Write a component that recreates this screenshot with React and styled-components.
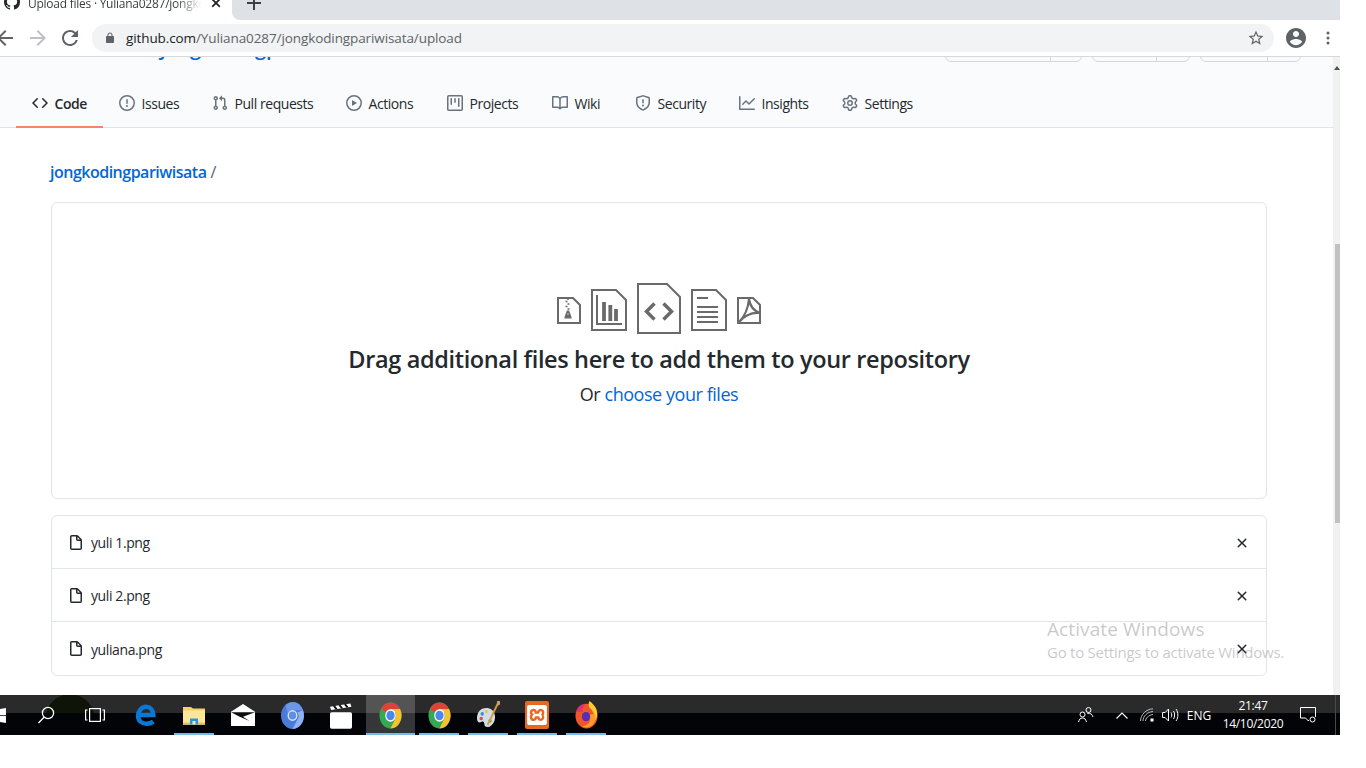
import React from 'react';
import styled, { createGlobalStyle } from 'styled-components';
import { FaWindows } from 'react-icons/fa';
import { SiXampp } from 'react-icons/si';

const Global = createGlobalStyle`
  html, body { margin: 0; padding: 0; background: #fff; }
  * { box-sizing: border-box; }
  body { font-family: "Open Sans", "Noto Sans", "Liberation Sans", sans-serif; color: #24292e; }
`;

const P = {
  code: 'M4.72 3.22a.75.75 0 011.06 1.06L2.06 8l3.72 3.72a.75.75 0 11-1.06 1.06L.47 8.53a.75.75 0 010-1.06l4.25-4.25zm6.56 0a.75.75 0 10-1.06 1.06L13.94 8l-3.72 3.72a.75.75 0 101.06 1.06l4.25-4.25a.75.75 0 000-1.06l-4.25-4.25z',
  issue: 'M8 1.5a6.5 6.5 0 100 13 6.5 6.5 0 000-13zM0 8a8 8 0 1116 0A8 8 0 010 8zm9 3a1 1 0 11-2 0 1 1 0 012 0zm-.25-6.25a.75.75 0 00-1.5 0v3.5a.75.75 0 001.5 0v-3.5z',
  pr: 'M7.177 3.073L9.573.677A.25.25 0 0110 .854v4.792a.25.25 0 01-.427.177L7.177 3.427a.25.25 0 010-.354zM3.75 2.5a.75.75 0 100 1.5.75.75 0 000-1.5zm-2.25.75a2.25 2.25 0 113 2.122v5.256a2.251 2.251 0 11-1.5 0V5.372A2.25 2.25 0 011.5 3.25zM11 2.5h-1V4h1a1 1 0 011 1v5.628a2.251 2.251 0 101.5 0V5A2.5 2.5 0 0011 2.5zm1 10.25a.75.75 0 111.5 0 .75.75 0 01-1.5 0zM3.75 12a.75.75 0 100 1.5.75.75 0 000-1.5z',
  play: 'M1.5 8a6.5 6.5 0 1113 0 6.5 6.5 0 01-13 0zM8 0a8 8 0 100 16A8 8 0 008 0zM6.379 5.227A.25.25 0 006 5.442v5.117a.25.25 0 00.379.214l4.264-2.559a.25.25 0 000-.428L6.379 5.227z',
  project: 'M1.75 0A1.75 1.75 0 000 1.75v12.5C0 15.216.784 16 1.75 16h12.5A1.75 1.75 0 0016 14.25V1.75A1.75 1.75 0 0014.25 0H1.75zM1.5 1.75a.25.25 0 01.25-.25h12.5a.25.25 0 01.25.25v12.5a.25.25 0 01-.25.25H1.75a.25.25 0 01-.25-.25V1.75zM11.75 3a.75.75 0 00-.75.75v7.5a.75.75 0 001.5 0v-7.5a.75.75 0 00-.75-.75zm-8.25.75a.75.75 0 011.5 0v5.5a.75.75 0 01-1.5 0v-5.5zM8 3a.75.75 0 00-.75.75v3.5a.75.75 0 001.5 0v-3.5A.75.75 0 008 3z',
  book: 'M0 1.75A.75.75 0 01.75 1h4.253c1.227 0 2.317.59 3 1.501A3.744 3.744 0 0111.006 1h4.245a.75.75 0 01.75.75v10.5a.75.75 0 01-.75.75h-4.507a2.25 2.25 0 00-1.591.659l-.622.621a.75.75 0 01-1.06 0l-.622-.621A2.25 2.25 0 005.258 13H.75a.75.75 0 01-.75-.75V1.75zm8.755 3a2.25 2.25 0 012.25-2.25H14.5v9h-3.757c-.71 0-1.4.201-1.992.572l.004-7.322zm-1.504 7.324l.004-5.073-.002-2.253A2.25 2.25 0 005.003 2.5H1.5v9h3.757a3.75 3.75 0 011.994.574z',
  shield: 'M7.467.133a1.75 1.75 0 011.066 0l5.25 1.68A1.75 1.75 0 0115 3.48V7c0 1.566-.32 3.182-1.303 4.682-.983 1.498-2.585 2.813-5.032 3.855a1.7 1.7 0 01-1.33 0c-2.447-1.042-4.049-2.357-5.032-3.855C1.32 10.182 1 8.566 1 7V3.48a1.75 1.75 0 011.217-1.667l5.25-1.68zm.61 1.429a.25.25 0 00-.153 0l-5.25 1.68a.25.25 0 00-.174.238V7c0 1.358.275 2.666 1.057 3.86.784 1.194 2.121 2.34 4.366 3.297a.2.2 0 00.154 0c2.245-.956 3.582-2.104 4.366-3.298C13.225 9.666 13.5 8.36 13.5 7V3.48a.25.25 0 00-.174-.237l-5.25-1.68zM9 10.5a1 1 0 11-2 0 1 1 0 012 0zm-.25-5.75a.75.75 0 10-1.5 0v3a.75.75 0 001.5 0v-3z',
  graph: 'M1.5 1.75a.75.75 0 00-1.5 0v12.5c0 .414.336.75.75.75h14.5a.75.75 0 000-1.5H1.5V1.75zm14.28 2.53a.75.75 0 00-1.06-1.06L10 7.94 7.53 5.47a.75.75 0 00-1.06 0L3.22 8.72a.75.75 0 001.06 1.06L7 7.06l2.47 2.47a.75.75 0 001.06 0l5.25-5.25z',
  gear: 'M7.429 1.525a6.593 6.593 0 011.142 0c.036.003.108.036.137.146l.289 1.105c.147.56.55.967.997 1.189.174.086.341.183.501.29.417.278.97.423 1.53.27l1.102-.303c.11-.03.175.016.195.046.219.31.41.641.573.989.014.031.022.11-.059.19l-.815.806c-.411.406-.562.957-.53 1.456a4.588 4.588 0 010 .582c-.032.499.119 1.05.53 1.456l.815.806c.08.08.073.159.059.19a6.494 6.494 0 01-.573.99c-.02.029-.086.074-.195.045l-1.103-.303c-.559-.153-1.112-.008-1.529.27-.16.107-.327.204-.5.29-.449.222-.851.628-.998 1.189l-.289 1.105c-.029.11-.101.143-.137.146a6.613 6.613 0 01-1.142 0c-.036-.003-.108-.037-.137-.146l-.289-1.105c-.147-.56-.55-.967-.997-1.189a4.502 4.502 0 01-.501-.29c-.417-.278-.97-.423-1.53-.27l-1.102.303c-.11.03-.175-.016-.195-.046a6.492 6.492 0 01-.573-.989c-.014-.031-.022-.11.059-.19l.815-.806c.411-.406.562-.957.53-1.456a4.587 4.587 0 010-.582c.032-.499-.119-1.05-.53-1.456l-.815-.806c-.08-.08-.073-.159-.059-.19a6.44 6.44 0 01.573-.99c.02-.029.086-.075.195-.045l1.103.303c.559.153 1.112.008 1.529-.27.16-.107.327-.204.5-.29.449-.222.851-.628.998-1.189l.289-1.105c.029-.11.101-.143.137-.146zM8 0c-.236 0-.47.01-.701.03-.743.065-1.29.615-1.458 1.261l-.29 1.106c-.017.066-.078.158-.211.224a5.994 5.994 0 00-.668.386c-.123.082-.233.09-.3.071L3.27 2.776c-.644-.177-1.392.02-1.82.63a7.977 7.977 0 00-.704 1.217c-.315.675-.111 1.422.363 1.891l.815.806c.05.048.098.147.088.294a6.084 6.084 0 000 .772c.01.147-.038.246-.088.294l-.815.806c-.474.469-.678 1.216-.363 1.891.2.428.436.835.704 1.218.428.609 1.176.806 1.82.63l1.103-.303c.066-.019.176-.011.299.071.213.143.436.272.668.386.133.066.194.158.212.224l.289 1.106c.169.646.715 1.196 1.458 1.26a8.094 8.094 0 001.402 0c.743-.064 1.29-.614 1.458-1.26l.29-1.106c.017-.066.078-.158.211-.224a5.98 5.98 0 00.668-.386c.123-.082.233-.09.3-.071l1.102.302c.644.177 1.392-.02 1.82-.63.268-.382.505-.789.704-1.217.315-.675.111-1.422-.364-1.891l-.814-.806c-.05-.048-.098-.147-.088-.294a6.1 6.1 0 000-.772c-.01-.147.039-.246.088-.294l.814-.806c.475-.469.679-1.216.364-1.891a7.992 7.992 0 00-.704-1.218c-.428-.609-1.176-.806-1.82-.63l-1.103.303c-.066.019-.176.011-.299-.071a5.991 5.991 0 00-.668-.386c-.133-.066-.194-.158-.212-.224L10.16 1.29C9.99.645 9.444.095 8.701.031A8.094 8.094 0 008 0zm1.5 8a1.5 1.5 0 11-3 0 1.5 1.5 0 013 0zM11 8a3 3 0 11-6 0 3 3 0 016 0z',
  file: 'M3.75 1.5a.25.25 0 00-.25.25v11.5c0 .138.112.25.25.25h8.5a.25.25 0 00.25-.25V6H9.75A1.75 1.75 0 018 4.25V1.5H3.75zm5.75.56v2.19c0 .138.112.25.25.25h2.19L9.5 2.06zM2 1.75C2 .784 2.784 0 3.75 0h5.086c.464 0 .909.184 1.237.513l3.414 3.414c.329.328.513.773.513 1.237v8.086A1.75 1.75 0 0112.25 15h-8.5A1.75 1.75 0 012 13.25V1.75z',
  x: 'M3.72 3.72a.75.75 0 011.06 0L8 6.94l3.22-3.22a.75.75 0 111.06 1.06L9.06 8l3.22 3.22a.75.75 0 11-1.06 1.06L8 9.06l-3.22 3.22a.75.75 0 01-1.06-1.06L6.94 8 3.72 4.78a.75.75 0 010-1.06z',
  github: 'M8 0C3.58 0 0 3.58 0 8c0 3.54 2.29 6.53 5.47 7.59.4.07.55-.17.55-.38 0-.19-.01-.82-.01-1.49-2.01.37-2.53-.49-2.69-.94-.09-.23-.48-.94-.82-1.13-.28-.15-.68-.52-.01-.53.63-.01 1.08.58 1.23.82.72 1.21 1.87.87 2.33.66.07-.52.28-.87.51-1.07-1.78-.2-3.64-.89-3.64-3.95 0-.87.31-1.59.82-2.15-.08-.2-.36-1.02.08-2.12 0 0 .67-.21 2.2.82.64-.18 1.32-.27 2-.27.68 0 1.36.09 2 .27 1.53-1.04 2.2-.82 2.2-.82.44 1.1.16 1.92.08 2.12.51.56.82 1.27.82 2.15 0 3.07-1.87 3.75-3.65 3.95.29.25.54.73.54 1.48 0 1.07-.01 1.93-.01 2.2 0 .21.15.46.55.38A8.013 8.013 0 0016 8c0-4.42-3.58-8-8-8z',
};

const M = {
  back: 'M20 11H7.83l5.59-5.59L12 4l-8 8 8 8 1.41-1.41L7.83 13H20v-2z',
  forward: 'M12 4l-1.41 1.41L16.17 11H4v2h12.17l-5.58 5.59L12 20l8-8z',
  reload: 'M17.65 6.35A7.958 7.958 0 0012 4c-4.42 0-7.99 3.58-7.99 8s3.57 8 7.99 8c3.73 0 6.84-2.55 7.73-6h-2.08A5.99 5.99 0 0112 18c-3.31 0-6-2.69-6-6s2.69-6 6-6c1.66 0 3.14.69 4.22 1.78L13 11h7V4l-2.35 2.35z',
  star: 'M22 9.24l-7.19-.62L12 2 9.19 8.63 2 9.24l5.46 4.73L5.82 21 12 17.27 18.18 21l-1.63-7.03L22 9.24zM12 15.4l-3.76 2.27 1-4.28-3.32-2.88 4.38-.38L12 6.1l1.71 4.04 4.38.38-3.32 2.88 1 4.28L12 15.4z',
  account: 'M12 2C6.48 2 2 6.48 2 12s4.48 10 10 10 10-4.48 10-10S17.52 2 12 2zm0 3c1.66 0 3 1.34 3 3s-1.34 3-3 3-3-1.34-3-3 1.34-3 3-3zm0 14.2c-2.5 0-4.71-1.28-6-3.22.03-1.99 4-3.08 6-3.08 1.99 0 5.97 1.09 6 3.08-1.29 1.94-3.5 3.22-6 3.22z',
  lock: 'M18 8h-1V6c0-2.76-2.24-5-5-5S7 3.24 7 6v2H6c-1.1 0-2 .9-2 2v10c0 1.1.9 2 2 2h12c1.1 0 2-.9 2-2V10c0-1.1-.9-2-2-2zM9 6c0-1.66 1.34-3 3-3s3 1.34 3 3v2H9V6z',
  more: 'M12 5.500a1.500 1.500 0 100 3 1.500 1.500 0 000-3zm0 5a1.500 1.500 0 100 3 1.500 1.500 0 000-3zm0 5a1.500 1.500 0 100 3 1.500 1.500 0 000-3z',
};

const Screen = styled.div`
  position: relative; width: 1340px; height: 735px; display: flex; flex-direction: column; overflow: hidden; background: #fff;
`;

/* browser chrome */
const TabStrip = styled.div`display: flex; height: 20px; flex: none; background: #fff;`;
const ActiveTab = styled.div`
  width: 232px; height: 20px; overflow: hidden; display: flex; align-items: flex-start; padding-left: 4px; flex: none;
`;
const Favicon = styled.svg`width: 16px; height: 16px; margin-top: -6px; fill: #24292e; flex: none;`;
const TabTitle = styled.span`
  width: 174px; margin: -4px 0 0 8px; font-size: 12px; line-height: 16px; color: #3c4043; white-space: nowrap; overflow: hidden; letter-spacing: -0.25px;
  mask-image: linear-gradient(90deg, #000 85%, transparent);
`;
const TabClose = styled.svg`width: 14px; height: 14px; margin: -4px 0 0 7px; fill: #202124; stroke: #202124; stroke-width: .6; flex: none;`;
const TabRest = styled.div`
  flex: 1; background: #dee1e6; border-bottom-left-radius: 8px; padding-left: 14px; height: 20px; overflow: hidden;
`;
const NewTab = styled.svg`display: block; width: 16px; height: 16px; margin-top: -5px; fill: none; stroke: #3c4043; stroke-width: 2;`;

const Toolbar = styled.div`
  height: 37px; flex: none; display: flex; align-items: flex-start; padding-top: 4px; background: #fff; border-bottom: 1px solid #d6d8de;
`;
const NavIcon = styled.svg`
  width: 24px; height: 24px; margin-top: 2px; flex: none; fill: ${p => p.$color || '#5f6368'}; margin-left: ${p => p.$ml ?? 0}px;
`;
const Omnibox = styled.div`
  flex: 1; height: 28px; margin: 0 10px; border-radius: 14px; background: #f1f3f4; display: flex; align-items: center; padding: 0 9px 0 12px;
`;
const Lock = styled.svg`width: 12px; height: 12px; fill: #5f6368; flex: none;`;
const Url = styled.div`
  flex: 1; margin-left: 10px; font-size: 13.5px; color: #5f6368; letter-spacing: -0.1px; white-space: nowrap;
  b { font-weight: 400; color: #202124; }
`;
const StarIcon = styled.svg`width: 18px; height: 18px; fill: #5f6368; flex: none;`;

/* page */
const Viewport = styled.div`flex: 1; display: flex; min-height: 0; overflow: hidden;`;
const Page = styled.div`flex: 1; min-width: 0; display: flex; flex-direction: column;`;
const RepoHead = styled.div`background: #fafbfc; border-bottom: 1px solid #e1e4e8; height: 71px; flex: none; display: flex; flex-direction: column;`;
const TitleRow = styled.div`
  height: 5px; flex: none; overflow: hidden; display: flex; align-items: flex-end; padding: 0 32px;
`;
const RepoTitle = styled.div`
  font-size: 20px; line-height: 20px; margin-bottom: 4px; white-space: nowrap; color: #0366d6; letter-spacing: -0.1px;
  span { color: #586069; margin: 0 4px; }
  b { font-weight: 600; }
`;
const Actions = styled.div`margin-left: auto; display: flex; gap: 10px; align-items: flex-end;`;
const BtnPair = styled.div`
  display: flex; height: 28px; width: ${p => p.$w}px; border: 1px solid #d5d6d8; border-radius: 6px; background: #fafbfc; flex: none;
`;
const BtnMain = styled.div`flex: 1; border-right: 1px solid #d5d6d8;`;
const BtnCount = styled.div`width: ${p => p.$w}px; flex: none;`;
const TabNav = styled.nav`display: flex; padding-left: 16px; margin-top: auto; margin-bottom: -1px;`;
const NavTab = styled.div`
  display: flex; align-items: center; gap: 6.5px; height: 48px; padding: 0 16px; font-size: 14px; color: #24292e;
  border-bottom: 2px solid ${p => (p.$active ? '#f9826c' : 'transparent')};
  font-weight: ${p => (p.$active ? 600 : 400)};
  svg { width: 16px; height: 16px; fill: ${p => (p.$active ? '#24292e' : '#6a737d')}; fill-rule: evenodd; flex: none; }
`;
const NavLabel = styled.span`display: block; width: ${p => p.$w}px; white-space: nowrap; letter-spacing: -0.45px;`;

const Main = styled.main`padding: 32px 66px 0 51px; display: flex; flex-direction: column;`;
const Crumb = styled.div`
  font-size: 16px; line-height: 24px; height: 24px; color: #586069; white-space: nowrap; letter-spacing: -0.5px; margin-left: -1px;
  b { font-weight: 600; color: #0366d6; margin-right: 4px; }
`;
const DropBox = styled.section`
  margin-top: 18px; height: 297px; border: 1px solid #e1e4e8; border-radius: 6px; display: flex; flex-direction: column; align-items: center; padding-top: 79px;
`;
const DropIcons = styled.svg`
  display: block; width: 206px; height: 53px; fill: none; stroke: #6a6a6a;
`;
const DropTitle = styled.h2`
  margin: 8px 0 0; font-size: 23.5px; line-height: 32px; font-weight: 600; color: #24292e; white-space: nowrap; letter-spacing: -0.36px;
`;
const DropSub = styled.p`
  margin: 7px 0 0; font-size: 18px; line-height: 24px; color: #24292e; white-space: nowrap; letter-spacing: -0.45px;
  a { color: #0366d6; }
`;
const FileList = styled.section`margin-top: 16px; border: 1px solid #e1e4e8; border-radius: 6px;`;
const FileRow = styled.div`
  height: 53px; display: flex; align-items: center; padding: 1px 16px 0 16px; font-size: 14px; letter-spacing: -0.4px;
  &:not(:last-child) { border-bottom: 1px solid #e1e4e8; }
`;
const FileIcon = styled.svg`width: 16px; height: 16px; fill: #24292e; fill-rule: evenodd; flex: none;`;
const FileName = styled.span`flex: 1; margin-left: 7px; color: #24292e;`;
const RemoveIcon = styled.svg`width: 16px; height: 16px; fill: #24292e; flex: none;`;

const Scrollbar = styled.div`width: 7px; flex: none; background: #f1f1f1; padding: 187px 0 0 2px; position: relative;`;
const ScrollUp = styled.div`
  position: absolute; right: 0; top: 9px; width: 0; height: 0; border: 3px solid transparent; border-top: 0; border-bottom: 4px solid #505050;
`;
const Thumb = styled.div`height: 279px; background: #c1c1c1;`;

/* activate watermark */
const Watermark = styled.div`
  position: absolute; left: 1047px; top: 616px; color: rgba(110, 110, 110, .38); white-space: nowrap; pointer-events: none;
`;
const WmTitle = styled.div`font-size: 19px; line-height: 26px; letter-spacing: 0.1px;`;
const WmSub = styled.div`font-size: 15px; line-height: 20px; letter-spacing: -0.25px;`;

/* taskbar */
const Taskbar = styled.footer`
  height: 40px; flex: none; display: flex; position: relative; color: #fff; overflow: hidden;
  background:
    radial-gradient(circle 25px at 70px 24px, #0f1408 98%, transparent 100%) 0 0 / 100% 18px no-repeat,
    linear-gradient(#2a2a2a 0 18px, #020407 18px 100%);
`;
const Slots = styled.div`display: flex; margin-left: -26.5px;`;
const Slot = styled.div`
  width: 49px; height: 40px; display: flex; align-items: center; justify-content: center; position: relative; flex: none;
  padding-right: ${p => p.$pr || 0}px;
  background: ${p => (p.$active ? 'rgba(255,255,255,.2)' : 'transparent')};
  &::after {
    content: ''; display: ${p => (p.$running ? 'block' : 'none')}; position: absolute; bottom: 0; left: 4.5px; right: 4.5px; height: 2px; background: #76b9ed;
  }
`;
const ActiveSlot = styled(Slot)`&::after { left: 0; right: 0; }`;
const Tray = styled.div`margin-left: auto; display: flex; align-items: center; height: 40px;`;
const TraySlot = styled.div`
  width: ${p => p.$w}px; display: flex; align-items: center; justify-content: center; flex: none; font-size: 12px; color: #fff;
  svg { display: block; }
`;
const Clock = styled.div`
  width: 82px; text-align: center; font-size: 12px; line-height: 18.5px; letter-spacing: -0.3px; flex: none;
`;
const TrayEnd = styled.div`width: 18px; height: 40px; flex: none; padding-left: 13px;`;
const TrayLine = styled.div`width: 1px; height: 40px; background: #4a4a4a;`;

const Oct = ({ d }) => <svg viewBox="0 0 16 16"><path d={d} /></svg>;

const ChromeLogo = () => (
  <svg width="23" height="27" viewBox="0 0 24 24" preserveAspectRatio="none">
    <circle cx="12" cy="12" r="11.500" fill="#34a853" />
    <path d="M12 .5a11.500 11.500 0 0 1 9.960 5.750H12a5.750 5.750 0 0 0-4.980 2.870L2.040 6.250A11.500 11.500 0 0 1 12 .5z" fill="#db4437" />
    <path d="M21.960 6.250A11.500 11.500 0 0 1 12 23.500l4.980-8.630a5.750 5.750 0 0 0 0-5.750H12V6.250z" fill="#fbc02d" />
    <circle cx="12" cy="12" r="5.500" fill="#fff" />
    <circle cx="12" cy="12" r="4.300" fill="#4f86ec" />
  </svg>
);

const ChromiumLogo = () => (
  <svg width="23" height="27" viewBox="0 0 24 26" preserveAspectRatio="none">
    <ellipse cx="12" cy="13" rx="12" ry="13" fill="#4b7bd8" />
    <path d="M12 0a12 13 0 0 1 11 8H12a5 5 0 0 0-5 3L5 3a12 13 0 0 1 7-3z" fill="#6b97e8" />
    <path d="M23 8a12 13 0 0 1-11 18l5-9a5 5 0 0 0 0-7z" fill="#8fb2f0" />
    <circle cx="12" cy="13" r="5.200" fill="#d6e4fb" />
    <circle cx="12" cy="13" r="3.800" fill="#5f8de2" />
  </svg>
);

const EdgeLogo = () => (
  <svg width="22" height="24" viewBox="0 0 24 24" fill="none" stroke="#0a78d7" strokeWidth="5">
    <path d="M21 19.200c-2 1.500-4.500 2.300-7 2.300-5.500 0-9.500-3.200-9.500-8.500S8.500 3 13 3s8 3.500 8 9H6" />
  </svg>
);

const SearchIcon = () => (
  <svg width="18" height="18" viewBox="0 0 18 18" fill="none" stroke="#fff" strokeWidth="1.3">
    <circle cx="11" cy="7" r="5.600" />
    <path d="M7 11.200 1.500 17" />
  </svg>
);

const TaskView = () => (
  <svg width="20" height="14" viewBox="0 0 20 14" fill="none" stroke="#fff" strokeWidth="1.2">
    <rect x="4.600" y=".6" width="10.800" height="12.800" />
    <path d="M2.600 2H.6v10h2M17.400 2h2v10h-2" />
  </svg>
);

const Explorer = () => (
  <svg width="22" height="21" viewBox="0 0 22 20">
    <path d="M0 1.500h8l2 1.500h12V19H0z" fill="#f4cf6b" />
    <rect x="0" y="5" width="22" height="14" fill="#fde69a" />
    <rect x="0" y="17" width="22" height="2" fill="#e8c15e" />
    <path d="M7 13h8v6H7z" fill="#1d9be0" />
    <rect x="9.500" y="15.500" width="3" height="3.500" fill="#fde69a" />
  </svg>
);

const MailIcon = () => (
  <svg width="24" height="22" viewBox="0 0 22 20">
    <path d="M0 7 11 0l11 7v13H0z" fill="#fff" />
    <path d="M0 7.500H22L11 11.500l6 4-9-4z" fill="#0a0c10" />
  </svg>
);

const Clapper = () => (
  <svg width="22" height="27" viewBox="0 0 20 24">
    <path d="M0 4 18.500 1 19.500 4 1 7z" fill="#fff" />
    <path d="M3.500 3.300 6 6.200M8.500 2.500 11 5.400M13.500 1.700 16 4.600" stroke="#0a0c10" strokeWidth="1.700" />
    <rect x="0" y="9" width="20" height="15" rx="1.500" fill="#fff" />
  </svg>
);

const Palette = () => (
  <svg width="23" height="28" viewBox="0 0 22 24" preserveAspectRatio="none">
    <path d="M9 6C3 6 0 10 0 15c0 3 2 4 4 3 2-1 3 0 3 2s2 3 5 2c4-2 6-6 5-10-1-4-4-6-8-6z" fill="#cfdde6" />
    <circle cx="5" cy="11" r="1.600" fill="#3d8ad6" />
    <circle cx="9" cy="9" r="1.600" fill="#ecc94b" />
    <circle cx="4" cy="15" r="1.600" fill="#d8534a" />
    <circle cx="12.500" cy="17" r="1.600" fill="#5fae57" />
    <path d="M20 0 9.500 20 10.800 21 21.500 1z" fill="#e0963a" />
    <path d="M19 0h3v3l-2 1z" fill="#b9a27c" />
  </svg>
);

const XamppLogo = styled.div`
  width: 24px; height: 28px; border-radius: 2px; background: #e8681f; color: #fff; display: flex; align-items: center; justify-content: center;
`;

const Firefox = () => (
  <svg width="23" height="28" viewBox="0 0 24 26" preserveAspectRatio="none">
    <circle cx="12" cy="14" r="11.500" fill="#f0562a" />
    <path d="M1 10c2-5 6-7.500 10-7.500C8 6 7 8 8 10c-3 0-5 0-7 0z" fill="#d9346c" />
    <path d="M15 0c3 2 7 5 8 10 .5 3 0 6-2 8 0-5-2-9-6-12-1-2-1-4 0-6z" fill="#ffcb2f" />
    <path d="M21 12c2 5-1 10-6 12-3 1-6 .5-8-.5 5 0 9-3 9-7 0-2-1-3-1-4z" fill="#ff9d2a" />
    <circle cx="11.500" cy="14.500" r="4.300" fill="#5a2eb0" />
  </svg>
);

const People = () => (
  <svg width="16" height="16" viewBox="0 0 16 16" fill="none" stroke="#fff" strokeWidth="1">
    <circle cx="4.500" cy="7.500" r="2.500" />
    <path d="M.6 15c.4-2.600 1.800-4 3.900-4s3.500 1.400 3.900 4" />
    <circle cx="10.500" cy="3" r="2.500" />
    <path d="M9.300 6.300c2.800-.4 5.200 1 5.700 3.700" />
  </svg>
);

const Chevron = () => (
  <svg width="12" height="7" viewBox="0 0 12 7" fill="none" stroke="#fff" strokeWidth="1.100"><path d="M.5 6.500 6 1l5.500 5.500" /></svg>
);

const Wifi = () => (
  <svg width="14" height="14" viewBox="0 0 14 14" fill="none" stroke="#c8c8c8" strokeWidth=".9">
    <path d="M.5 13C.5 7 6 1 13 .8M3 13c0-4.500 4-9 10-9.500M5.500 13c0-2.500 3-6 7.500-6.500" />
    <rect x="10.500" y="10.500" width="3" height="3" fill="#fff" stroke="none" />
  </svg>
);

const Volume = () => (
  <svg width="17" height="14" viewBox="0 0 17 14" fill="none" stroke="#fff" strokeWidth="1">
    <path d="M.6 4.500h2.500L6.500 1v12L3.100 9.500H.6z" />
    <path d="M9 4.500c1 1.500 1 3.500 0 5M11.500 3c1.500 2.500 1.500 5.500 0 8M14 1c2.500 3.500 2.500 8.500 0 12" />
  </svg>
);

const Notify = () => (
  <svg width="16" height="16" viewBox="0 0 16 16" fill="none" stroke="#fff" strokeWidth="1">
    <path d="M.5.500h15v9.500M.5.500v10.500h5l3 3v-1" />
    <circle cx="12.500" cy="12.500" r="2.500" />
  </svg>
);

const Illustration = () => (
  <DropIcons viewBox="0 0 206 53">
    <g strokeWidth="2">
      {/* zip */}
      <path d="M2 16h15l7 7v18H2z" />
      <path d="M11 17h2M9.500 19.500h2M11.500 22h2M9.500 24.500h2M11.500 27h2" strokeWidth="1.500" />
      <path d="M11.500 29.500h1l1.500 4H10zM8.500 35.500h7" strokeWidth="1.800" />
      {/* chart */}
      <path d="M36 8h24l10 10v30H36z" />
      <path d="M41 13v29h25" />
      <path d="M48 20v19M54.300 23v16M60 27v12" strokeWidth="3.800" />
      {/* code */}
      <path d="M82 2h29l13 13v36H82z" />
      <path d="M98.500 21.500l-8 8 8 8M107.500 21.500l8 8-8 8" strokeWidth="3.500" />
      {/* text */}
      <path d="M136 8h24l10 10v30h-34z" />
      <path d="M141 16h11M141 25h21M141 30h21M141 35h21M141 40h21" />
      {/* pdf */}
      <path d="M182 16h15l7 7v18h-22z" />
      <path d="M183 40c4-4 9-12 10-23 1 7 5 12 11 14-8-1-15 2-21 9z" strokeWidth="2.200" />
    </g>
  </DropIcons>
);

const tabs = [
  { d: P.code, label: 'Code', w: 32.5, active: true },
  { d: P.issue, label: 'Issues', w: 38.5 },
  { d: P.pr, label: 'Pull requests', w: 79.5 },
  { d: P.play, label: 'Actions', w: 46.5 },
  { d: P.project, label: 'Projects', w: 50.5 },
  { d: P.book, label: 'Wiki', w: 28.5 },
  { d: P.shield, label: 'Security', w: 49.5 },
  { d: P.graph, label: 'Insights', w: 48.5 },
  { d: P.gear, label: 'Settings', w: 50.5 },
];

const files = ['yuli 1.png', 'yuli 2.png', 'yuliana.png'];

export default function App() {
  return (
    <>
      <Global />
      <Screen>
        <TabStrip>
          <ActiveTab>
            <Favicon viewBox="0 0 16 16"><path d={P.github} /></Favicon>
            <TabTitle>Upload files · Yuliana0287/jongkoding</TabTitle>
            <TabClose viewBox="0 0 16 16"><path d={P.x} /></TabClose>
          </ActiveTab>
          <TabRest>
            <NewTab viewBox="0 0 16 16"><path d="M8 1v14M1 8h14" /></NewTab>
          </TabRest>
        </TabStrip>
        <Toolbar>
          <NavIcon viewBox="0 0 24 24" $ml={-7}><path d={M.back} /></NavIcon>
          <NavIcon viewBox="0 0 24 24" $ml={9} $color="#bdc1c6"><path d={M.forward} /></NavIcon>
          <NavIcon viewBox="0 0 24 24" $ml={8}><path d={M.reload} /></NavIcon>
          <Omnibox>
            <Lock viewBox="0 0 24 24"><path d={M.lock} /></Lock>
            <Url><b>github.com</b>/Yuliana0287/jongkodingpariwisata/upload</Url>
            <StarIcon viewBox="0 0 24 24"><path d={M.star} /></StarIcon>
          </Omnibox>
          <NavIcon viewBox="0 0 24 24"><path d={M.account} /></NavIcon>
          <NavIcon viewBox="0 0 24 24" $ml={8}><path d={M.more} /></NavIcon>
        </Toolbar>
        <Viewport>
          <Page>
            <RepoHead>
              <TitleRow>
                <RepoTitle>Yuliana0287<span>/</span><b>jongkodingpariwisata</b></RepoTitle>
                <Actions>
                  <BtnPair $w={137}><BtnMain /><BtnCount $w={30} /></BtnPair>
                  <BtnPair $w={98}><BtnMain /><BtnCount $w={32} /></BtnPair>
                  <BtnPair $w={101}><BtnMain /><BtnCount $w={32} /></BtnPair>
                </Actions>
              </TitleRow>
              <TabNav>
                {tabs.map(t => (
                  <NavTab key={t.label} $active={t.active}>
                    <Oct d={t.d} />
                    <NavLabel $w={t.w}>{t.label}</NavLabel>
                  </NavTab>
                ))}
              </TabNav>
            </RepoHead>
            <Main>
              <Crumb><b>jongkodingpariwisata</b>/</Crumb>
              <DropBox>
                <Illustration />
                <DropTitle>Drag additional files here to add them to your repository</DropTitle>
                <DropSub>Or <a>choose your files</a></DropSub>
              </DropBox>
              <FileList>
                {files.map(f => (
                  <FileRow key={f}>
                    <FileIcon viewBox="0 0 16 16"><path d={P.file} /></FileIcon>
                    <FileName>{f}</FileName>
                    <RemoveIcon viewBox="0 0 16 16"><path d={P.x} /></RemoveIcon>
                  </FileRow>
                ))}
              </FileList>
            </Main>
          </Page>
          <Scrollbar>
            <ScrollUp />
            <Thumb />
          </Scrollbar>
        </Viewport>
        <Taskbar>
          <Slots>
            <Slot><FaWindows size={17} color="#fff" /></Slot>
            <Slot $pr={2}><SearchIcon /></Slot>
            <Slot $pr={2}><TaskView /></Slot>
            <Slot><EdgeLogo /></Slot>
            <Slot $running><Explorer /></Slot>
            <Slot><MailIcon /></Slot>
            <Slot><ChromiumLogo /></Slot>
            <Slot><Clapper /></Slot>
            <ActiveSlot $running $active><ChromeLogo /></ActiveSlot>
            <Slot $running><ChromeLogo /></Slot>
            <Slot $running><Palette /></Slot>
            <Slot $running><XamppLogo><SiXampp size={20} /></XamppLogo></Slot>
            <Slot $running><Firefox /></Slot>
          </Slots>
          <Tray>
            <TraySlot $w={36}><People /></TraySlot>
            <TraySlot $w={36}><Chevron /></TraySlot>
            <TraySlot $w={14}><Wifi /></TraySlot>
            <TraySlot $w={32}><Volume /></TraySlot>
            <TraySlot $w={26}>ENG</TraySlot>
            <Clock>21:47<br />14/10/2020</Clock>
            <TraySlot $w={28}><Notify /></TraySlot>
            <TrayEnd><TrayLine /></TrayEnd>
          </Tray>
        </Taskbar>
        <Watermark>
          <WmTitle>Activate Windows</WmTitle>
          <WmSub>Go to Settings to activate Windows.</WmSub>
        </Watermark>
      </Screen>
    </>
  );
}
